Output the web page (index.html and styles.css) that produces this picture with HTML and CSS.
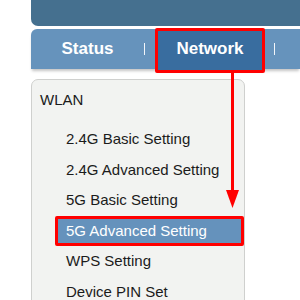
FILE: index.html
```html
<!DOCTYPE html>
<html lang="en">
  <head>
    <meta charset="UTF-8" />
    <meta name="viewport" content="width=device-width, initial-scale=1.0" />
    <title>Router Setup</title>
    <link rel="stylesheet" href="styles.css">
  </head>
  <body>
    <section class="page">
      <div class="top"></div>
      <div class="nav">
        <a class="nav-item" href="javascript:;">Status</a>
        <span class="sep"></span>
        <a class="nav-item current" href="javascript:;">Network</a>
        <span class="sep"></span>
      </div>
      <div class="side">
        <h3>WLAN</h3>
        <ul>
          <li><a href="javascript:;">2.4G Basic Setting</a></li>
          <li><a href="javascript:;">2.4G Advanced Setting</a></li>
          <li><a href="javascript:;">5G Basic Setting</a></li>
          <li class="active"><a href="javascript:;">5G Advanced Setting</a></li>
          <li><a href="javascript:;">WPS Setting</a></li>
          <li><a href="javascript:;">Device PIN Set</a></li>
        </ul>
      </div>
    </section>
    <!-- red guide arrow from the tab down to the menu item -->
    <svg class="arrow" width="300" height="300" viewBox="0 0 300 300">
      <rect x="231" y="72" width="3" height="122" fill="#f00" />
      <polygon points="226,190 239,190 232.5,208" fill="#f00" />
    </svg>
  </body>
</html>
```

FILE: styles.css
```css
* {
  margin: 0;
  padding: 0;
  box-sizing: border-box;
}
body {
  font-family: "Liberation Sans", Arial, sans-serif;
  background: #fff;
  overflow: hidden;
}
a {
  text-decoration: none;
}
li {
  list-style-type: none;
}
.page {
  padding-left: 31px;
  height: 300px;
  overflow: hidden;
}
.top {
  height: 26px;
  background-color: #45708f;
  border-bottom-left-radius: 7px;
}
.nav {
  display: flex;
  align-items: center;
  height: 40px;
  margin-top: 3px;
  background-color: #6693bc;
  border-top-left-radius: 6px;
  box-shadow: 0 3px 3px -1px #c4c4c4;
}
.nav-item {
  display: block;
  color: #fff;
  font-size: 17px;
  font-weight: bold;
  line-height: 20px;
  text-align: center;
}
.nav-item:first-child {
  width: 113px;
}
.nav .current {
  width: 110px;
  height: 45px;
  margin: -1px 9px -4px 10px;
  padding-top: 8px;
  background-color: #396d9f;
  border: 3px solid #f00;
  border-radius: 2px;
}
.sep {
  width: 1px;
  height: 12px;
  background-color: #f3f6fa;
}
.side {
  width: 214px;
  height: 260px;
  margin-top: 10px;
  padding: 10px 0 0 8px;
  background-color: #f2f3f1;
  border: 1px solid #cfd0ce;
  border-radius: 7px;
}
.side h3 {
  font-size: 15px;
  font-weight: normal;
  line-height: 20px;
  color: #1b1b1b;
  margin-bottom: 14px;
}
.side li a {
  display: block;
  height: 30.6px;
  line-height: 30.6px;
  padding-left: 26px;
  font-size: 15px;
  color: #1b1b1b;
}
.side li.active a {
  margin-left: 15px;
  padding-left: 8px;
  line-height: 24px;
  color: #fff;
  background-color: #6592bc;
  border: 3px solid #f00;
  border-radius: 2px;
}
.arrow {
  position: absolute;
  left: 0;
  top: 0;
  pointer-events: none;
}
```
